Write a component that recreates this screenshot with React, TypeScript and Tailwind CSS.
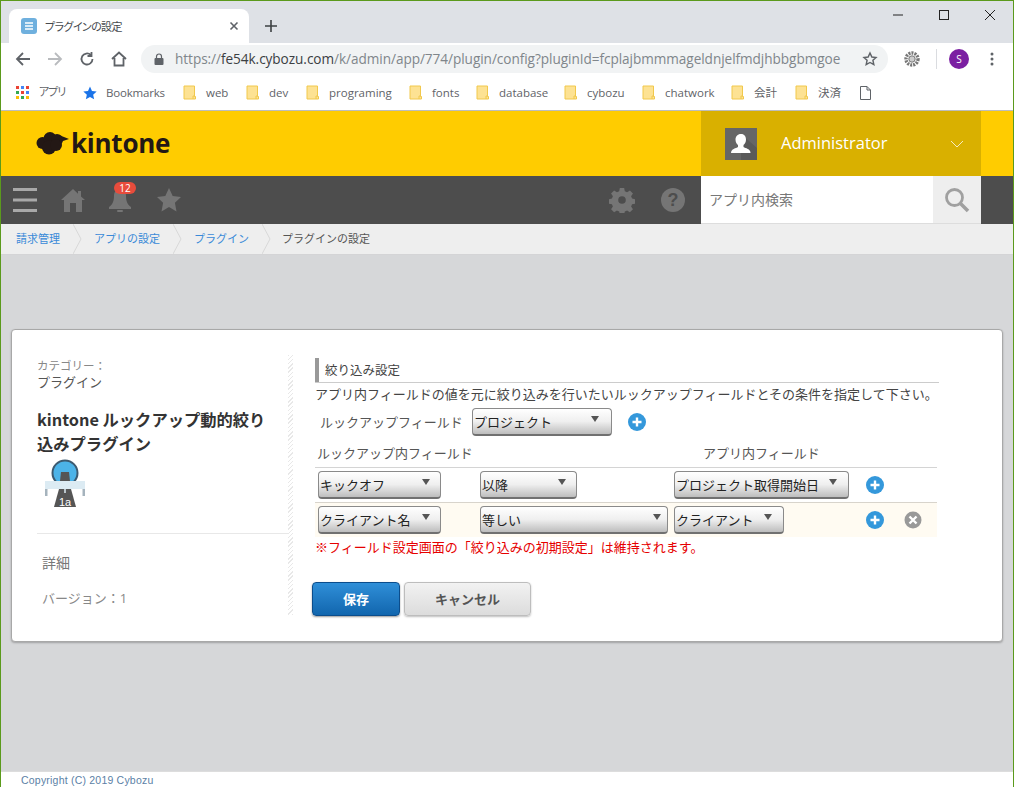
import React from "react";

const FONT = "font-['Noto_Sans_CJK_JP','Noto_Sans',sans-serif]";

function Folder() {
  return (
    <svg width="13" height="15" viewBox="0 0 13 15" className="shrink-0">
      <path d="M1 1h10.5v10.5h1v2.5H1z" fill="#fde293" stroke="#f1c84c" strokeWidth="1" />
      <path d="M10 14v-3h2" fill="none" stroke="#f1c84c" strokeWidth="1" />
    </svg>
  );
}

function Bookmark({ w, label }: { w: string; label: string }) {
  return (
    <div className={`flex items-center gap-[10px] ${w}`}>
      <Folder />
      <span className="text-[11.5px] text-[#5f6368] whitespace-nowrap">{label}</span>
    </div>
  );
}

function Crumb({ w, label, link = true }: { w: string; label: string; link?: boolean }) {
  return (
    <div className={`flex items-center h-full relative ${w}`}>
      <span className={`text-[11px] pb-[1px] whitespace-nowrap ${link ? "text-[#3a8ad8]" : "text-[#555]"}`}>{label}</span>
      {link && (
        <svg width="9" height="30" viewBox="0 0 9 30" className="absolute right-[-1px] top-0">
          <path d="M0 0l8 15L0 30" fill="none" stroke="#d8d8d8" strokeWidth="1" />
        </svg>
      )}
    </div>
  );
}

function Select({ w, label, arrow }: { w: string; label: string; arrow: string }) {
  return (
    <div
      className={`relative h-7 ${w} shrink-0 rounded-[4px] border border-[#8a8a8a] border-b-2 border-b-[#707070] bg-gradient-to-b from-white via-[#efefef] to-[#bdbdbd] flex items-center pl-[1px]`}
    >
      <span className="text-[13px] text-[#222] whitespace-nowrap leading-none">{label}</span>
      <svg width="8" height="6" viewBox="0 0 8 6" className={`absolute top-[7px] ${arrow}`}>
        <path d="M0 0h8L4 6z" fill="#555" />
      </svg>
    </div>
  );
}

function Plus({ className = "" }: { className?: string }) {
  return (
    <svg width="18" height="18" viewBox="0 0 18 18" className={`shrink-0 ${className}`}>
      <circle cx="9" cy="9" r="9" fill="#3498db" />
      <path d="M9 4.5v9M4.5 9h9" stroke="#fff" strokeWidth="2.4" />
    </svg>
  );
}

function Cross() {
  return (
    <svg width="18" height="18" viewBox="0 0 18 18" className="shrink-0 ml-5">
      <circle cx="9" cy="9" r="8.5" fill="#999" />
      <path d="M5.5 5.5l7 7M12.5 5.5l-7 7" stroke="#fff" strokeWidth="2.4" />
    </svg>
  );
}

function PluginIcon() {
  return (
    <svg width="42" height="50" viewBox="0 0 42 50" className="ml-2 mt-1">
      <circle cx="20" cy="14" r="12.500" fill="#4cb3e8" stroke="#3d5a70" strokeWidth="2" />
      <path d="M15 22l1-9h8l1 9z" fill="#555" />
      <path d="M4 27l6-3v6z" fill="#f7c25a" />
      <rect x="0" y="22" width="40" height="8" fill="#dcebf3" />
      <rect x="0" y="30" width="2.5" height="7" fill="#a5b3bd" />
      <rect x="37.5" y="30" width="2.5" height="7" fill="#a5b3bd" />
      <path d="M14 30h12l5 18H9z" fill="#555" />
      <path d="M20 30v4" stroke="#dcebf3" strokeWidth="1.5" />
      <text x="20" y="46.500" fontSize="11" textAnchor="middle" fill="#fff" fontFamily="Liberation Sans, sans-serif">1a</text>
    </svg>
  );
}

export default function App() {
  return (
    <div className={`w-[1014px] h-[787px] overflow-hidden flex flex-col border border-[#5b9a1c] border-b-0 ${FONT}`}>
      {/* Tab strip */}
      <div className="h-[42px] shrink-0 bg-[#dee1e6] flex items-end pl-2 relative">
        <div className="w-[240px] h-[34px] bg-white rounded-t-[8px] flex items-center pl-3 pr-[10px]">
          <svg width="16" height="16" viewBox="0 0 16 16" className="shrink-0">
            <rect width="16" height="16" rx="3" fill="#6fb0de" />
            <path d="M4 5h8M4 8h8M4 11h8" stroke="#fff" strokeWidth="1.6" />
          </svg>
          <span className="ml-2 text-[11px] tracking-[-0.6px] text-[#45494e] grow [font-feature-settings:'palt']">プラグインの設定</span>
          <svg width="10" height="10" viewBox="0 0 10 10" className="shrink-0">
            <path d="M1.5 1.5l7 7M8.5 1.5l-7 7" stroke="#5f6368" strokeWidth="1.6" />
          </svg>
        </div>
        <svg width="12" height="12" viewBox="0 0 12 12" className="ml-4 mb-[11px]">
          <path d="M6 0v12M0 6h12" stroke="#3c4043" strokeWidth="1.6" />
        </svg>
        <div className="absolute right-[18px] top-[8px] flex items-center gap-9">
          <svg width="10" height="12" viewBox="0 0 10 12"><path d="M0 6h10" stroke="#222" strokeWidth="1" /></svg>
          <svg width="10" height="10" viewBox="0 0 10 10"><rect x=".5" y=".5" width="9" height="9" fill="none" stroke="#222" /></svg>
          <svg width="10" height="10" viewBox="0 0 10 10"><path d="M0 0l10 10M10 0L0 10" stroke="#222" strokeWidth="1" /></svg>
        </div>
      </div>

      {/* Toolbar */}
      <div className="h-8 shrink-0 bg-white flex items-center pl-[14px] pr-[14px]">
        <svg width="16" height="16" viewBox="0 0 16 16"><path d="M15 8H2M8 2L2 8l6 6" fill="none" stroke="#5f6368" strokeWidth="1.8" /></svg>
        <svg width="16" height="16" viewBox="0 0 16 16" className="ml-4"><path d="M1 8h13M8 2l6 6-6 6" fill="none" stroke="#b9bbbe" strokeWidth="1.8" /></svg>
        <svg width="16" height="16" viewBox="0 0 16 16" className="ml-4"><path d="M13.5 8A5.5 5.5 0 1 1 11.8 4M12.5 1v4h-4" fill="none" stroke="#5f6368" strokeWidth="1.8" /></svg>
        <svg width="16" height="16" viewBox="0 0 16 16" className="ml-4"><path d="M1 8l7-6.5L15 8M3.5 7v7.5h9V7" fill="none" stroke="#5f6368" strokeWidth="1.8" /></svg>
        <div className="ml-[14px] w-[747px] h-7 bg-[#f1f3f4] rounded-full flex items-center pl-[13px] relative">
          <svg width="10" height="12" viewBox="0 0 10 12" className="shrink-0">
            <path d="M2.5 5V3.5a2.5 2.5 0 0 1 5 0V5" fill="none" stroke="#5f6368" strokeWidth="1.2" />
            <rect x="0.5" y="5" width="9" height="7" rx="1" fill="#5f6368" />
          </svg>
          <span className="ml-[11px] text-[13.6px] whitespace-nowrap font-['Open_Sans',sans-serif] text-[#80868b] tracking-[-0.05px]">
            https://<span className="text-[#3c4043]">fe54k.cybozu.com</span>/k/admin/app/774/plugin/config?pluginId=fcplajbmmmageldnjelfmdjhbbgbmgoe
          </span>
          <svg width="16" height="16" viewBox="0 0 24 24" className="absolute right-[10px] top-[6px]">
            <path d="M12 3l2.8 6 6.2.7-4.6 4.3 1.3 6.4L12 17.2 6.300 20.400l1.300-6.400L3 9.700 9.200 9z" fill="none" stroke="#5f6368" strokeWidth="2.2" />
          </svg>
        </div>
        <svg width="16" height="16" viewBox="0 0 16 16" className="ml-4 shrink-0">
          <circle cx="8" cy="8" r="6" fill="none" stroke="#777" strokeWidth="3.4" strokeDasharray="2 1" />
          <circle cx="8" cy="8" r="3.2" fill="#ccc" stroke="#777" />
        </svg>
        <div className="w-px h-5 bg-[#dadce0] ml-4 shrink-0" />
        <div className="ml-3 w-5 h-5 rounded-full bg-[#7b1fa2] text-white text-[10px] flex items-center justify-center shrink-0 font-['Open_Sans',sans-serif]">S</div>
        <svg width="4" height="14" viewBox="0 0 4 14" className="ml-[21px] shrink-0">
          <circle cx="2" cy="2" r="1.5" fill="#5f6368" /><circle cx="2" cy="7" r="1.5" fill="#5f6368" /><circle cx="2" cy="12" r="1.5" fill="#5f6368" />
        </svg>
      </div>

      {/* Bookmarks */}
      <div className="h-[35px] shrink-0 bg-white flex items-center pl-[15px] font-['Open_Sans','Noto_Sans_CJK_JP',sans-serif]">
        <div className="flex items-center gap-[10px] w-[67px]">
          <svg width="13" height="13" viewBox="0 0 13 13" className="shrink-0">
            <rect x="0" y="0" width="3" height="3" fill="#ea4335" /><rect x="5" y="0" width="3" height="3" fill="#4285f4" /><rect x="10" y="0" width="3" height="3" fill="#ea4335" />
            <rect x="0" y="5" width="3" height="3" fill="#34a853" /><rect x="5" y="5" width="3" height="3" fill="#ea4335" /><rect x="10" y="5" width="3" height="3" fill="#4285f4" />
            <rect x="0" y="10" width="3" height="3" fill="#fbbc05" /><rect x="5" y="10" width="3" height="3" fill="#34a853" /><rect x="10" y="10" width="3" height="3" fill="#fbbc05" />
          </svg>
          <span className="text-[11px] tracking-[-1px] text-[#5f6368] [font-feature-settings:'palt']">アプリ</span>
        </div>
        <div className="flex items-center gap-[9px] w-[100px]">
          <svg width="14" height="14" viewBox="0 0 24 24" className="shrink-0"><path d="M12 1l3.400 7.500 8 .9-6 5.400 1.700 8L12 18.700 4.900 22.800l1.700-8-6-5.400 8-.9z" fill="#1a73e8" /></svg>
          <span className="text-[11.5px] tracking-[-0.2px] text-[#5f6368]">Bookmarks</span>
        </div>
        <Bookmark w="w-[63px]" label="web" />
        <Bookmark w="w-[60px]" label="dev" />
        <Bookmark w="w-[103px]" label="programing" />
        <Bookmark w="w-[67px]" label="fonts" />
        <Bookmark w="w-[88px]" label="database" />
        <Bookmark w="w-[78px]" label="cybozu" />
        <Bookmark w="w-[89px]" label="chatwork" />
        <Bookmark w="w-[64px]" label="会計" />
        <Bookmark w="w-[65px]" label="決済" />
        <svg width="11" height="14" viewBox="0 0 11 14"><path d="M.5.500h6.500l3.500 3.500v9.500H.5zM7 .5V4h3.500" fill="none" stroke="#5f6368" /></svg>
      </div>

      {/* Kintone header */}
      <div className="h-[66px] shrink-0 bg-[#fc0] border-t border-[#bdbdbd] flex pl-[35px] pr-[32px] justify-between">
        <div className="flex items-center pb-[1px]">
          <svg width="33" height="24" viewBox="0 0 33 24" className="shrink-0">
            <g fill="#231815">
              <circle cx="6.500" cy="12" r="6" />
              <circle cx="14" cy="7.500" r="6.500" />
              <circle cx="21" cy="9" r="6" />
              <circle cx="13" cy="16.500" r="7" />
              <circle cx="20" cy="14" r="6" />
              <path d="M23 4l10 4-9 3z" />
            </g>
          </svg>
          <span className="text-[26px] font-bold text-[#231815] font-['Open_Sans',sans-serif] ml-[2px] tracking-[-0.01em] leading-none">kintone</span>
        </div>
        <div className="w-[280px] bg-[#d9b000] flex items-center pl-6 pr-[17px]">
          <svg width="32" height="32" viewBox="0 0 32 32" className="shrink-0">
            <rect width="32" height="32" fill="#666" />
            <path d="M16 6l16 14v12H16z" fill="#5a5a5a" />
            <path d="M16 6c3.500 0 5 2.500 5 5.500 0 2.500-1 4.500-2.500 5.500v2c2 1.500 7 1.500 7 6H6c0-4.500 5-4.500 7-6v-2C11.500 16 10.500 14 10.500 11.500 10.500 8.500 12.500 6 16 6z" fill="#fff" />
          </svg>
          <span className="ml-6 text-[16.5px] text-white grow font-['Open_Sans',sans-serif]">Administrator</span>
          <svg width="14" height="8" viewBox="0 0 14 8" className="shrink-0"><path d="M1 1l6 6 6-6" fill="none" stroke="#fff" strokeOpacity=".75" /></svg>
        </div>
      </div>

      {/* Nav */}
      <div className="h-12 shrink-0 bg-[#4d4d4d] flex items-center pl-3 pr-[32px]">
        <svg width="24" height="24" viewBox="0 0 24 24" className="shrink-0">
          <path d="M0 1.500h24M0 12h24M0 22.500h24" stroke="#a8a8a8" strokeWidth="3" />
        </svg>
        <svg width="24" height="24" viewBox="0 0 24 24" className="ml-6 shrink-0">
          <path d="M12 1L0 12h3v12h6v-9h6v9h6V12h3l-4-3.600V3h-3v2.700z" fill="#757575" />
        </svg>
        <div className="ml-[23px] w-6 h-6 relative shrink-0">
          <svg width="24" height="24" viewBox="0 0 24 24">
            <path d="M12 1c-4 0-6 3-6 7 0 6-2 9-5 11v2h22v-2c-3-2-5-5-5-11 0-4-2-7-6-7z" fill="#757575" />
            <rect x="9" y="22" width="6" height="2" rx="1" fill="#757575" />
          </svg>
          <span className="absolute left-[6px] top-[-6px] w-[22px] h-3 rounded-full bg-[#e74c3c] text-white text-[10px] leading-3 text-center font-['Open_Sans',sans-serif]">12</span>
        </div>
        <svg width="24" height="24" viewBox="0 0 24 24" className="ml-[25px] shrink-0">
          <path d="M12 0l3.700 8 8.300 1-6.100 5.800 1.600 8.700L12 19l-7.500 4.500 1.600-8.700L0 9l8.300-1z" fill="#757575" />
        </svg>
        <div className="grow" />
        <svg width="26" height="26" viewBox="0 0 24 24" fill="#757575" className="shrink-0">
          <path fillRule="evenodd" d="M10 1h4l.6 3 2.100.9 2.600-1.700 2.800 2.800-1.700 2.600.9 2.100 3 .6v4l-3 .6-.9 2.100 1.700 2.600-2.800 2.800-2.600-1.700-2.100.9-.6 3h-4l-.6-3-2.100-.9-2.600 1.700-2.800-2.800 1.700-2.600-.9-2.100-3-.6v-4l3-.6.9-2.100-1.700-2.600 2.800-2.800 2.600 1.700 2.100-.9zM12 8.500a3.500 3.500 0 1 0 0 7 3.500 3.500 0 0 0 0-7z" />
        </svg>
        <div className="ml-[26px] w-6 h-6 rounded-full bg-[#757575] text-[#4d4d4d] text-[18px] font-bold leading-6 text-center shrink-0 font-['Liberation_Sans',sans-serif]">?</div>
        <div className="ml-[16px] w-[232px] h-full bg-white flex items-center pl-2 pb-[1px] shrink-0 border-b border-[#ddd]">
          <span className="text-[14px] text-[#777]">アプリ内検索</span>
        </div>
        <div className="w-12 h-full bg-[#eee] flex items-center justify-center shrink-0 border-b border-[#ddd]">
          <svg width="26" height="26" viewBox="0 0 26 26">
            <circle cx="10.500" cy="10.500" r="8" fill="none" stroke="#a0a0a0" strokeWidth="2.800" />
            <path d="M16.500 16.500L24 24" stroke="#a0a0a0" strokeWidth="3.600" />
          </svg>
        </div>
      </div>

      {/* Breadcrumb */}
      <div className="h-[31px] shrink-0 bg-[#eee] flex items-center pl-[15px] border-b border-[#d4d4d6]">
        <Crumb w="w-[65px]" label="請求管理" />
        <Crumb w="w-[100px] pl-[13px]" label="アプリの設定" />
        <Crumb w="w-[89px] pl-[13px]" label="プラグイン" />
        <Crumb w="w-[120px] pl-[12px]" label="プラグインの設定" link={false} />
      </div>

      {/* Body */}
      <div className="grow bg-[#d6d7d9] pl-[10px] pr-[10px] pt-[74px]">
        <div className="h-[313px] bg-white rounded-[4px] border border-[#a8a8a8] shadow-[0_1px_2px_rgba(0,0,0,0.25)] flex pl-[25px] pt-[25px]">
          {/* Left */}
          <div className="w-[251px] shrink-0 flex flex-col h-[262px]">
            <div className="text-[11.5px] text-[#888] leading-[16px] pt-[2px]">カテゴリー：</div>
            <div className="text-[13px] text-[#555] leading-[18px]">プラグイン</div>
            <div className="mt-[16px] w-[240px] text-[16.300px] font-bold text-[#333] leading-[24px]">kintone ルックアップ動的絞り込みプラグイン</div>
            <PluginIcon />
            <div className="mt-[24px] border-t border-[#e8e8e8] pl-[5px]">
              <div className="mt-[18px] text-[14px] text-[#777] leading-[20px]">詳細</div>
              <div className="mt-[16px] text-[13px] text-[#888] leading-[20px]">バージョン：<span className="font-['Open_Sans',sans-serif]">1</span></div>
            </div>
          </div>
          <div className="w-[5px] h-[260px] shrink-0 bg-[repeating-linear-gradient(135deg,#e8e8e8_0,#e8e8e8_1px,#fff_1px,#fff_3px)]" />
          {/* Right */}
          <div className="ml-[22px] w-[624px] flex flex-col">
            <div className="w-[624px] h-[25px] border-b border-[#ccc] flex mt-[3px]">
              <div className="w-1 h-full bg-[#999] shrink-0" />
              <span className="ml-[6px] text-[12.500px] text-[#444] leading-[24px]">絞り込み設定</span>
            </div>
            <div className="text-[13px] text-[#444] leading-[20px] mt-[1px] whitespace-nowrap">アプリ内フィールドの値を元に絞り込みを行いたいルックアップフィールドとその条件を指定して下さい。</div>
            <div className="flex items-center mt-[4px] pl-[5px]">
              <span className="w-[152px] text-[13px] text-[#555] shrink-0">ルックアップフィールド</span>
              <Select w="w-[140px]" label="プロジェクト" arrow="right-[12px]" />
              <Plus className="ml-4" />
            </div>
            <div className="flex h-[31px] items-center pl-[2px] pt-[2px] text-[13px] text-[#555] shrink-0">
              <span className="w-[386px]">ルックアップ内フィールド</span>
              <span>アプリ内フィールド</span>
            </div>
            <div className="w-[622px] border-t border-[#d4d4d4] h-[35px] flex items-center pl-[3px]">
              <div className="w-[162px]"><Select w="w-[123px]" label="キックオフ" arrow="right-[10px]" /></div>
              <div className="w-[194px]"><Select w="w-[97px]" label="以降" arrow="right-[10px]" /></div>
              <div className="w-[192px]"><Select w="w-[175px]" label="プロジェクト取得開始日" arrow="right-[11px]" /></div>
              <Plus />
            </div>
            <div className="w-[622px] border-t border-[#d8d4cc] h-[35px] bg-[#fffbf2] flex items-center pl-[3px]">
              <div className="w-[162px]"><Select w="w-[123px]" label="クライアント名" arrow="right-[10px]" /></div>
              <div className="w-[194px]"><Select w="w-[188px]" label="等しい" arrow="right-[6px]" /></div>
              <div className="w-[192px]"><Select w="w-[110px]" label="クライアント" arrow="right-[11px]" /></div>
              <Plus />
              <Cross />
            </div>
            <div className="text-[13px] text-[#e60000] leading-[20px] whitespace-nowrap">※フィールド設定画面の「絞り込みの初期設定」は維持されます。</div>
            <div className="flex mt-[25px] -ml-[3px] gap-1">
              <div className="w-[88px] h-[34px] rounded-[4px] border border-[#0b4d8c] bg-gradient-to-b from-[#2f8fd8] to-[#1166ae] shadow-[0_1px_2px_rgba(0,0,0,0.4)] text-white text-[13px] font-bold flex items-center justify-center">保存</div>
              <div className="w-[127px] h-[34px] rounded-[4px] border border-[#bdbdbd] bg-gradient-to-b from-[#f2f2f2] to-[#dcdcdc] shadow-[0_1px_2px_rgba(0,0,0,0.25)] text-[#555] text-[13px] font-bold flex items-center justify-center">キャンセル</div>
            </div>
          </div>
        </div>
      </div>

      {/* Footer */}
      <div className="h-4 shrink-0 bg-white border-t border-[#ddd] pl-5 text-[10.500px] leading-[17px] tracking-[0.02em] text-[#5b7fa6] font-['Liberation_Sans',sans-serif]">
        Copyright (C) 2019 Cybozu
      </div>
    </div>
  );
}
